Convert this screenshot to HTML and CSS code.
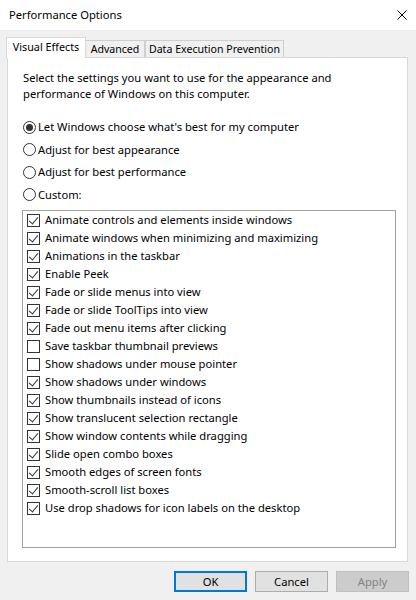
FILE: index.html
```html
<!DOCTYPE html>
<html>
<head>
<meta charset="utf-8">
<link rel="stylesheet" href="styles.css">
</head>
<body>
<div class="window">
  <div class="titlebar">
    <span class="title">Performance Options</span>
    <svg class="close" width="10" height="10" viewBox="0 0 10 10"><path d="M0.5 0.5 L9.5 9.5 M9.5 0.5 L0.5 9.5" stroke="#000" stroke-width="1"/></svg>
  </div>
  <div class="tabs">
    <div class="tab selected">Visual Effects</div>
    <div class="tab">Advanced</div>
    <div class="tab">Data Execution Prevention</div>
  </div>
  <div class="panel">
    <p class="intro">Select the settings you want to use for the appearance and<br>performance of Windows on this computer.</p>
    <div class="radios">
      <div class="radio"><span class="rbox on"></span>Let Windows choose what's best for my computer</div>
      <div class="radio"><span class="rbox"></span>Adjust for best appearance</div>
      <div class="radio"><span class="rbox"></span>Adjust for best performance</div>
      <div class="radio"><span class="rbox"></span>Custom:</div>
    </div>
    <div class="list">
      <div class="item"><span class="cb on"></span>Animate controls and elements inside windows</div>
      <div class="item"><span class="cb on"></span>Animate windows when minimizing and maximizing</div>
      <div class="item"><span class="cb on"></span>Animations in the taskbar</div>
      <div class="item"><span class="cb on"></span>Enable Peek</div>
      <div class="item"><span class="cb on"></span>Fade or slide menus into view</div>
      <div class="item"><span class="cb on"></span>Fade or slide ToolTips into view</div>
      <div class="item"><span class="cb on"></span>Fade out menu items after clicking</div>
      <div class="item"><span class="cb"></span>Save taskbar thumbnail previews</div>
      <div class="item"><span class="cb"></span>Show shadows under mouse pointer</div>
      <div class="item"><span class="cb on"></span>Show shadows under windows</div>
      <div class="item"><span class="cb on"></span>Show thumbnails instead of icons</div>
      <div class="item"><span class="cb on"></span>Show translucent selection rectangle</div>
      <div class="item"><span class="cb on"></span>Show window contents while dragging</div>
      <div class="item"><span class="cb on"></span>Slide open combo boxes</div>
      <div class="item"><span class="cb on"></span>Smooth edges of screen fonts</div>
      <div class="item"><span class="cb on"></span>Smooth-scroll list boxes</div>
      <div class="item"><span class="cb on"></span>Use drop shadows for icon labels on the desktop</div>
    </div>
  </div>
  <div class="buttons">
    <div class="btn default">OK</div>
    <div class="btn">Cancel</div>
    <div class="btn disabled">Apply</div>
  </div>
</div>
</body>
</html>
```

FILE: styles.css
```css
html, body {
  margin: 0;
  padding: 0;
}
body {
  width: 416px;
  height: 600px;
  background: #f0f0f0;
  font-family: "Noto Sans", "Open Sans", sans-serif;
  font-size: 11.2px;
  color: #000;
  overflow: hidden;
}
.window {
  display: flex;
  flex-direction: column;
  height: 600px;
}
.titlebar {
  height: 30px;
  background: #fff;
  display: flex;
  align-items: center;
  justify-content: space-between;
  padding: 0 9px 0 9px;
  box-sizing: border-box;
}
.title {
  line-height: 16px;
}
.close {
  display: block;
}
.tabs {
  display: flex;
  align-items: flex-end;
  margin-top: 7px;
  padding-left: 6px;
  height: 20px;
  position: relative;
  z-index: 1;
}
.tab {
  height: 17px;
  box-sizing: border-box;
  border: 1px solid #cfcfcf;
  border-bottom: none;
  background: #f0f0f0;
  line-height: 17px;
  font-size: 10.6px;
  white-space: nowrap;
  text-align: center;
}
.tab.selected {
  height: 21px;
  background: #fff;
  width: 80px;
  margin-bottom: -1px;
  line-height: 17px;
  border-color: #d9d9d9;
  font-size: 10.8px;
}
.tab.two {
  width: 58px;
}
.tab:nth-child(2) {
  width: 59px;
  border-left: none;
}
.tab:nth-child(3) {
  width: 139px;
  border-left: 1px solid #cfcfcf;
}
.panel {
  margin-left: 7px;
  width: 401px;
  height: 505px;
  box-sizing: border-box;
  background: #fff;
  border: 1px solid #d9d9d9;
  padding: 12px 0 0 15px;
}
.intro {
  margin: 0;
  line-height: 16px;
}
.radios {
  margin-top: 14px;
  display: flex;
  flex-direction: column;
}
.radio {
  height: 22.5px;
  display: flex;
  align-items: center;
  line-height: 16px;
}
.rbox {
  width: 13px;
  height: 13px;
  box-sizing: border-box;
  border: 1px solid #333;
  border-radius: 50%;
  margin-right: 2px;
  display: flex;
  align-items: center;
  justify-content: center;
  flex: none;
}
.rbox.on::after {
  content: "";
  width: 7px;
  height: 7px;
  border-radius: 50%;
  background: #333;
}
.list {
  margin-top: 4px;
  margin-left: -1px;
  width: 374px;
  height: 338px;
  box-sizing: border-box;
  border: 1px solid #a0a0a0;
  padding: 0 0 0 4px;
}
.item {
  height: 18px;
  display: flex;
  align-items: center;
  line-height: 16px;
}
.cb {
  width: 13px;
  height: 13px;
  box-sizing: border-box;
  border: 1px solid #333;
  background: #fff;
  margin-right: 5px;
  flex: none;
  position: relative;
}
.cb.on::after {
  content: "";
  position: absolute;
  left: 3px;
  top: 0px;
  width: 4px;
  height: 8px;
  border-right: 1px solid #333;
  border-bottom: 1px solid #333;
  transform: rotate(40deg);
  transform-origin: center;
}
.buttons {
  display: flex;
  justify-content: flex-end;
  gap: 8px;
  padding-right: 7px;
  margin-top: 9px;
}
.btn {
  width: 73px;
  height: 21px;
  box-sizing: border-box;
  border: 1px solid #adadad;
  background: #e1e1e1;
  text-align: center;
  line-height: 19px;
}
.btn.default {
  border: 2px solid #0078d7;
  line-height: 17px;
}
.btn.disabled {
  background: #cccccc;
  border-color: #bfbfbf;
  color: #838383;
}
```
